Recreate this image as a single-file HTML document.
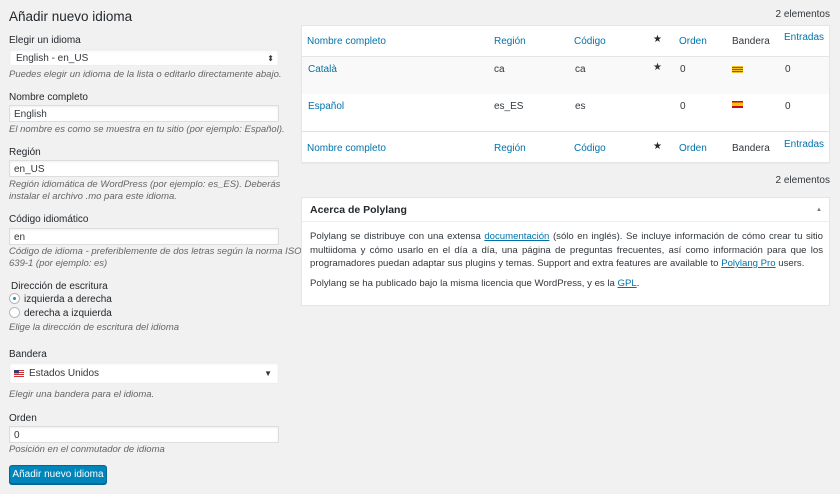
<!DOCTYPE html>
<html><head><meta charset="utf-8"><style>
*{margin:0;padding:0;box-sizing:border-box}
body{width:840px;height:494px;background:#f1f1f1;font-family:"Liberation Sans",sans-serif;font-size:10px;color:#23282d;position:relative;overflow:hidden}
.a{position:absolute;white-space:nowrap}
.in{position:absolute;left:9px;width:270px;background:#fff;border:1px solid #ddd;box-shadow:inset 0 1px 2px rgba(0,0,0,.07);font-size:10px;padding-left:4px;color:#32373c}
.h{position:absolute;left:9px;font-style:italic;color:#666;font-size:9.5px;line-height:12px}
.l{color:#0073aa}
.g{color:#32373c}
.rad{position:absolute;left:9px;width:11px;height:11px;border-radius:50%;border:1px solid #b4b9be;background:#fff}
</style></head><body>
<div class="a" style="left:9px;top:9px;font-size:13.5px">Añadir nuevo idioma</div>
<div class="a" style="left:9px;top:35px">Elegir un idioma</div>
<div class="in" style="top:49px;height:17px;line-height:17px;border-color:#eee;padding-left:6px">English - en_US<span style="position:absolute;right:4px;top:0;font-size:8px">⬍</span></div>
<div class="h" style="top:69px">Puedes elegir un idioma de la lista o editarlo directamente abajo.</div>
<div class="a" style="left:9px;top:92px">Nombre completo</div>
<div class="in" style="top:105px;height:17px;line-height:17px">English</div>
<div class="h" style="top:124px">El nombre es como se muestra en tu sitio (por ejemplo: Español).</div>
<div class="a" style="left:9px;top:147px">Región</div>
<div class="in" style="top:160px;height:17px;line-height:17px">en_US</div>
<div class="h" style="top:179px">Región idiomática de WordPress (por ejemplo: es_ES). Deberás<br>instalar el archivo .mo para este idioma.</div>
<div class="a" style="left:9px;top:214px">Código idiomático</div>
<div class="in" style="top:228px;height:17px;line-height:17px">en</div>
<div class="h" style="top:246px">Código de idioma - preferiblemente de dos letras según la norma ISO<br>639-1 (por ejemplo: es)</div>
<div class="a" style="left:11px;top:281px">Dirección de escritura</div>
<div class="rad" style="top:293px"><div style="position:absolute;left:3px;top:3px;width:3px;height:3px;border-radius:50%;background:#1e8cbe"></div></div>
<div class="a" style="left:24px;top:294px">izquierda a derecha</div>
<div class="rad" style="top:307px"></div>
<div class="a" style="left:24px;top:308px">derecha a izquierda</div>
<div class="h" style="top:322px">Elige la dirección de escritura del idioma</div>
<div class="a" style="left:9px;top:349px">Bandera</div>
<div class="in" style="top:362px;height:22px;line-height:22px;padding-left:4px;border-color:#eee"><span style="display:inline-block;width:10px;height:7px;background:linear-gradient(#3c3b6e 0 50%,transparent 50%) 0 0/5px 100% no-repeat,repeating-linear-gradient(#c33 0 1px,#fff 1px 2px);vertical-align:-1px;margin-right:5px"></span>Estados Unidos<span style="position:absolute;right:6px;top:0;font-size:8px">▼</span></div>
<div class="h" style="top:389px">Elegir una bandera para el idioma.</div>
<div class="a" style="left:9px;top:413px">Orden</div>
<div class="in" style="top:426px;height:17px;line-height:17px">0</div>
<div class="h" style="top:444px">Posición en el conmutador de idioma</div>
<div class="a" style="left:9px;top:465px;width:98px;height:19px;background:#0085ba;border:1px solid #006799;border-radius:3px;color:#fff;text-align:center;line-height:18px;box-shadow:0 1px 0 #006799">Añadir nuevo idioma</div>

<div class="a g" style="right:10px;top:9px">2 elementos</div>
<div class="a" style="left:301px;top:25px;width:529px;height:138px;background:#fff;border:1px solid #e5e5e5;box-shadow:0 1px 1px rgba(0,0,0,.04)"></div>
<div class="a" style="left:302px;top:56px;width:527px;height:38px;background:#f9f9f9;border-top:1px solid #e5e5e5"></div>
<div class="a" style="left:302px;top:131px;width:527px;height:1px;background:#e1e1e1"></div>
<div class="a l" style="left:307px;top:36px">Nombre completo</div>
<div class="a l" style="left:494px;top:36px">Región</div>
<div class="a l" style="left:574px;top:36px">Código</div>
<div class="a" style="left:653px;top:34px">★</div>
<div class="a l" style="left:679px;top:36px">Orden</div>
<div class="a g" style="left:732px;top:36px">Bandera</div>
<div class="a l" style="left:784px;top:32px">Entradas</div>
<div class="a l" style="left:308px;top:64px">Català</div>
<div class="a g" style="left:494px;top:64px">ca</div>
<div class="a g" style="left:575px;top:64px">ca</div>
<div class="a g" style="left:653px;top:62px">★</div>
<div class="a g" style="left:680px;top:64px">0</div>
<div class="a" style="left:732px;top:66px;width:11px;height:7px;background:repeating-linear-gradient(#f4c32a 0 1px,#d9352a 1px 2px)"></div>
<div class="a g" style="left:785px;top:64px">0</div>
<div class="a l" style="left:308px;top:101px">Español</div>
<div class="a g" style="left:494px;top:101px">es_ES</div>
<div class="a g" style="left:575px;top:101px">es</div>
<div class="a g" style="left:680px;top:101px">0</div>
<div class="a" style="left:732px;top:101px;width:11px;height:7px;background:linear-gradient(#c60b1e 0 25%,#ffc400 25% 75%,#c60b1e 75%)"></div>
<div class="a g" style="left:785px;top:101px">0</div>
<div class="a l" style="left:307px;top:143px">Nombre completo</div>
<div class="a l" style="left:494px;top:143px">Región</div>
<div class="a l" style="left:574px;top:143px">Código</div>
<div class="a" style="left:653px;top:141px">★</div>
<div class="a l" style="left:679px;top:143px">Orden</div>
<div class="a g" style="left:732px;top:143px">Bandera</div>
<div class="a l" style="left:784px;top:139px">Entradas</div>
<div class="a g" style="right:10px;top:175px">2 elementos</div>

<div class="a" style="left:301px;top:197px;width:529px;height:109px;background:#fff;border:1px solid #e5e5e5"></div>
<div class="a" style="left:302px;top:221px;width:527px;height:1px;background:#eee"></div>
<div class="a" style="left:310px;top:204px;font-weight:bold;font-size:10.5px">Acerca de Polylang</div>
<div class="a" style="left:816px;top:207px;font-size:6px;color:#72777c">▲</div>
<div class="a g" style="left:310px;top:230px;width:513px;white-space:normal;text-align:justify;line-height:13.5px;font-size:9.6px">Polylang se distribuye con una extensa <span class="l" style="text-decoration:underline">documentación</span> (sólo en inglés). Se incluye información de cómo crear tu sitio multiidoma y cómo usarlo en el día a día, una página de preguntas frecuentes, así como información para que los programadores puedan adaptar sus plugins y temas. Support and extra features are available to <span class="l" style="text-decoration:underline">Polylang Pro</span> users.</div>
<div class="a g" style="left:310px;top:278px;font-size:9.6px">Polylang se ha publicado bajo la misma licencia que WordPress, y es la <span class="l" style="text-decoration:underline">GPL</span>.</div>
</body></html>
